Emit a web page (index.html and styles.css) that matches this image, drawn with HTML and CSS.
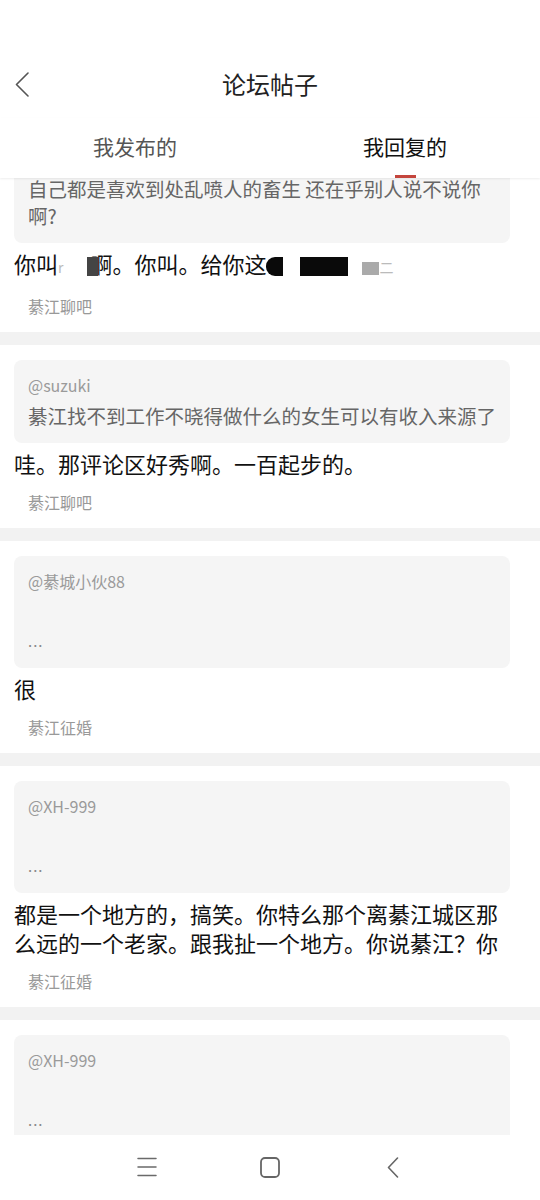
FILE: index.html
```html
<!DOCTYPE html>
<html lang="zh-CN">
<head>
<meta charset="utf-8">
<title>论坛帖子</title>
<link rel="stylesheet" href="styles.css">
</head>
<body>
<div class="screen">
  <div class="status"></div>
  <header class="header">
    <div class="back">
      <svg width="14" height="25" viewBox="0 0 14 25"><polyline points="13,1 1.5,12.5 13,24" fill="none" stroke="#555" stroke-width="1.6" stroke-linejoin="round" stroke-linecap="round"/></svg>
    </div>
    <h1 class="title">论坛帖子</h1>
    <div></div>
  </header>
  <nav class="tabs">
    <div class="tab">
      <span class="tab-text">我发布的</span>
    </div>
    <div class="tab active">
      <span class="tab-text">我回复的</span>
      <span class="indicator"></span>
    </div>
  </nav>
  <main class="list">
    <div class="list-inner">
      <section class="card first">
        <div class="quote">
          <div class="quote-text">自己都是喜欢到处乱喷人的畜生 还在乎别人说不说你啊?</div>
        </div>
        <p class="reply">你叫<span class="faint">r</span><span class="gap g1"></span><span class="blk dark"></span>啊。你叫。给你这<span class="blk black round"></span><span class="gap g2"></span><span class="blk black wide"></span><span class="gap g3"></span><span class="blk grey"></span><span class="faint">二</span></p>
        <div class="source">綦江聊吧</div>
      </section>
      <section class="card">
        <div class="quote">
          <div class="quote-name">@suzuki</div>
          <div class="quote-text">綦江找不到工作不晓得做什么的女生可以有收入来源了</div>
        </div>
        <p class="reply">哇。那评论区好秀啊。一百起步的。</p>
        <div class="source">綦江聊吧</div>
      </section>
      <section class="card">
        <div class="quote">
          <div class="quote-name">@綦城小伙88</div>
          <div class="quote-text"><br><span class="dots">...</span></div>
        </div>
        <p class="reply">很</p>
        <div class="source">綦江征婚</div>
      </section>
      <section class="card">
        <div class="quote">
          <div class="quote-name">@XH-999</div>
          <div class="quote-text"><br><span class="dots">...</span></div>
        </div>
        <p class="reply">都是一个地方的，搞笑。你特么那个离綦江城区那么远的一个老家。跟我扯一个地方。你说綦江？你</p>
        <div class="source">綦江征婚</div>
      </section>
      <section class="card">
        <div class="quote">
          <div class="quote-name">@XH-999</div>
          <div class="quote-text"><br><span class="dots">...</span></div>
        </div>
      </section>
    </div>
  </main>
  <footer class="navbar">
    <svg width="20" height="20" viewBox="0 0 20 20"><g stroke="#6a6a6a" stroke-width="1.5" stroke-linecap="round"><line x1="1" y1="1.5" x2="19" y2="1.5"/><line x1="1" y1="10" x2="19" y2="10"/><line x1="1" y1="18.5" x2="19" y2="18.5"/></g></svg>
    <svg width="20" height="21" viewBox="0 0 20 21"><rect x="1" y="1" width="18" height="19" rx="4" fill="none" stroke="#666" stroke-width="1.8"/></svg>
    <svg width="12" height="21" viewBox="0 0 12 21"><polyline points="10.5,1 1.5,10.5 10.5,20" fill="none" stroke="#666" stroke-width="1.6" stroke-linecap="round" stroke-linejoin="round"/></svg>
  </footer>
</div>
</body>
</html>
```

FILE: styles.css
```css
* { box-sizing: border-box; }
html, body { margin: 0; padding: 0; background: #fff; }
body {
  font-family: "Noto Sans CJK SC", "Noto Sans", sans-serif;
  color: #111;
}
.screen {
  width: 540px;
  height: 1200px;
  display: flex;
  flex-direction: column;
  overflow: hidden;
}
.status { height: 50px; flex: none; }
.header {
  height: 68px;
  flex: none;
  display: grid;
  grid-template-columns: 1fr auto 1fr;
  align-items: center;
  padding: 0 15px;
}
.back { display: flex; align-items: center; }
.back svg { display: block; }
.title {
  margin: 0;
  font-size: 24px;
  font-weight: 400;
  color: #222;
  line-height: 32px;
}
.tabs {
  height: 60px;
  flex: none;
  display: grid;
  grid-template-columns: 1fr 1fr;
  background: #fff;
  position: relative;
  z-index: 2;
  box-shadow: 0 1px 2px rgba(0,0,0,0.07);
}
.tab {
  display: flex;
  flex-direction: column;
  align-items: center;
  padding-top: 14px;
}
.tab-text {
  font-size: 21px;
  line-height: 28px;
  color: #555;
}
.tab.active .tab-text { color: #111; }
.indicator {
  margin-top: auto;
  width: 21px;
  height: 3px;
  background: #c4453d;
}
.list {
  flex: 1;
  overflow: hidden;
  background: #f2f2f2;
}
.list-inner {
  display: flex;
  flex-direction: column;
  gap: 13px;
}
.card {
  background: #fff;
  padding: 15px 30px 15px 14px;
}
.card.first { margin-top: -30px; }
.quote {
  background: #f5f5f5;
  border-radius: 8px;
  padding: 12px 14px 14px 14px;
}
.quote-name {
  font-size: 16px;
  line-height: 26px;
  color: #9a9a9a;
  margin-bottom: 4px;
}
.quote-text {
  font-size: 19.5px;
  line-height: 27px;
  color: #666;
}
.dots {
  font-size: 15px;
  color: #888;
  letter-spacing: 1px;
}
.reply {
  margin: 6px 0 0 0;
  font-size: 22px;
  line-height: 29px;
  color: #111;
}
.source {
  margin-top: 13px;
  padding-left: 14px;
  font-size: 16px;
  line-height: 22px;
  color: #999;
}
.faint { color: #bbb; font-size: 14px; }
.gap { display: inline-block; height: 10px; }
.g1 { width: 24px; }
.g2 { width: 17px; }
.g3 { width: 14px; }
.blk {
  display: inline-block;
  vertical-align: -3px;
  height: 19px;
}
.blk.dark { width: 11px; background: #444; margin-right: -8px; position: relative; }
.blk.black { background: #0a0a0a; }
.blk.round { width: 17px; border-radius: 9px 0 0 9px; }
.blk.wide { width: 48px; }
.blk.grey { width: 17px; height: 13px; background: #aaa; vertical-align: -2px; }
.navbar {
  height: 65px;
  flex: none;
  background: #fff;
  display: grid;
  grid-template-columns: repeat(3, 123px);
  justify-content: center;
  justify-items: center;
  align-items: center;
  padding-bottom: 1px;
}
.navbar svg { display: block; }
```
